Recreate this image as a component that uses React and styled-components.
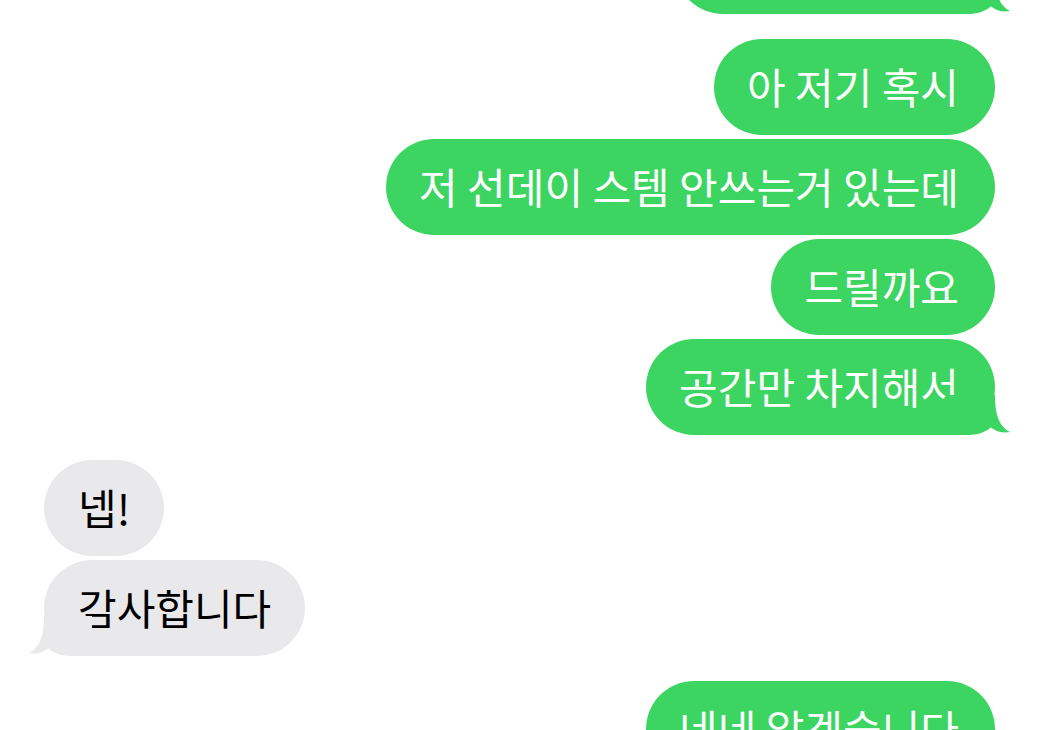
import React from 'react'
import styled, { createGlobalStyle } from 'styled-components'

const GlobalStyle = createGlobalStyle`
  html, body {
    margin: 0;
    padding: 0;
    background: #ffffff;
    overflow: hidden;
  }
  body {
    font-family: "Noto Sans CJK KR", "Noto Sans", sans-serif;
  }
`

const Screen = styled.div`
  width: 1040px;
  height: 730px;
  overflow: hidden;
  background: #ffffff;
`

const Thread = styled.div`
  display: flex;
  flex-direction: column;
  gap: 25px;
  padding: 0 45px 0 44px;
  margin-top: -82px;
`

const Group = styled.div`
  display: flex;
  flex-direction: column;
  gap: 4px;
  align-items: ${p => (p.$me ? 'flex-end' : 'flex-start')};
`

const Bubble = styled.div`
  position: relative;
  box-sizing: border-box;
  height: 96px;
  padding: 21px ${p => (p.$me ? '36px' : '34px')} 23px ${p => (p.$me ? '33px' : '34px')};
  border-radius: 48px;
  background: ${p => (p.$me ? '#3dd561' : '#e9e9eb')};
  color: ${p => (p.$me ? '#ffffff' : '#000000')};
  font-size: 42px;
  line-height: 52px;
  white-space: nowrap;
`

const TailSvg = styled.svg`
  position: absolute;
  bottom: 0;
  width: 64px;
  height: 40px;
  ${p => (p.$me ? 'right: -16px;' : 'left: -16px; transform: scaleX(-1);')}
`

function Tail({ me }) {
  return (
    <TailSvg $me={me} viewBox="0 0 64 40">
      <path
        d="M0 0 H48 C48 17 51 31 63 37 C56 38.5 49 36.5 44 32.5 C38 37.5 30 40 20 40 H0 Z"
        fill={me ? '#3dd561' : '#e9e9eb'}
      />
    </TailSvg>
  )
}

const groups = [
  { me: true, msgs: ['그럼 내일 봬요'] },
  { me: true, msgs: ['아 저기 혹시', '저 선데이 스템 안쓰는거 있는데', '드릴까요', '공간만 차지해서'] },
  { me: false, msgs: ['넵!', '감사합니다'] },
  { me: true, msgs: ['네네 알겠습니다'], open: true },
]

export default function App() {
  return (
    <Screen>
      <GlobalStyle />
      <Thread>
        {groups.map((g, gi) => (
          <Group key={gi} $me={g.me}>
            {g.msgs.map((m, i) => (
              <Bubble key={i} $me={g.me}>
                {m}
                {i === g.msgs.length - 1 && !g.open && <Tail me={g.me} />}
              </Bubble>
            ))}
          </Group>
        ))}
      </Thread>
    </Screen>
  )
}
